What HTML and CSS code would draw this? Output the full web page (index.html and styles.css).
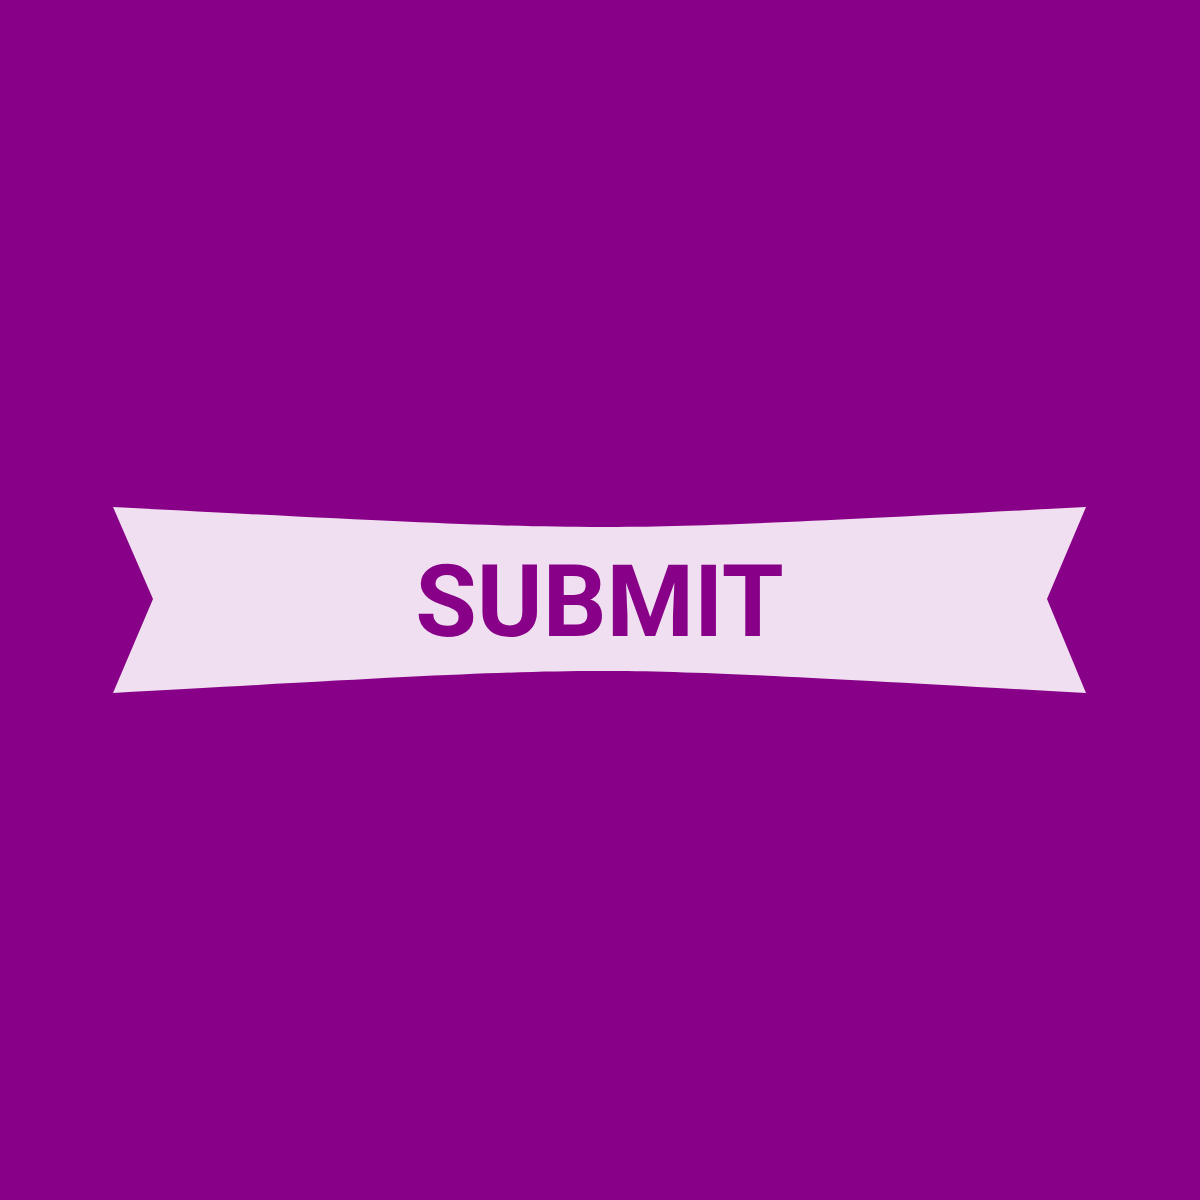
FILE: index.html
```html
<!DOCTYPE html>
<html lang="en">
<head>
<meta charset="utf-8">
<title>Submit</title>
<link rel="stylesheet" href="styles.css">
</head>
<body>
<main class="stage">
  <button class="ribbon" type="button">
    <svg class="ribbon-shape" viewBox="0 0 973 186" preserveAspectRatio="none" aria-hidden="true">
      <path d="M0,0 C287,15 387,20 487,20 C587,20 687,15 973,0 L934,92 L973,186 C687,170 587,164 487,164 C387,164 287,170 0,186 L40,92 Z"/>
    </svg>
    <span class="ribbon-label">SUBMIT</span>
  </button>
</main>
</body>
</html>
```
FILE: styles.css
```css
html, body {
  margin: 0;
  padding: 0;
}
body {
  background: #880088;
  font-family: Roboto, "Liberation Sans", Arial, sans-serif;
}
.stage {
  width: 1200px;
  height: 1200px;
  display: flex;
  align-items: center;
  justify-content: center;
}
.ribbon {
  position: relative;
  width: 973px;
  height: 186px;
  margin-left: -1px;
  padding: 0;
  border: 0;
  background: transparent;
  display: flex;
  align-items: center;
  justify-content: center;
  cursor: pointer;
}
.ribbon-shape {
  position: absolute;
  inset: 0;
  width: 100%;
  height: 100%;
}
.ribbon-shape path {
  fill: #f0dff0;
}
.ribbon-label {
  position: relative;
  top: 2px;
  font-family: Roboto, "Liberation Sans", Arial, sans-serif;
  font-weight: 700;
  font-size: 100px;
  line-height: 1;
  color: #880088;
  letter-spacing: 0;
}
```
